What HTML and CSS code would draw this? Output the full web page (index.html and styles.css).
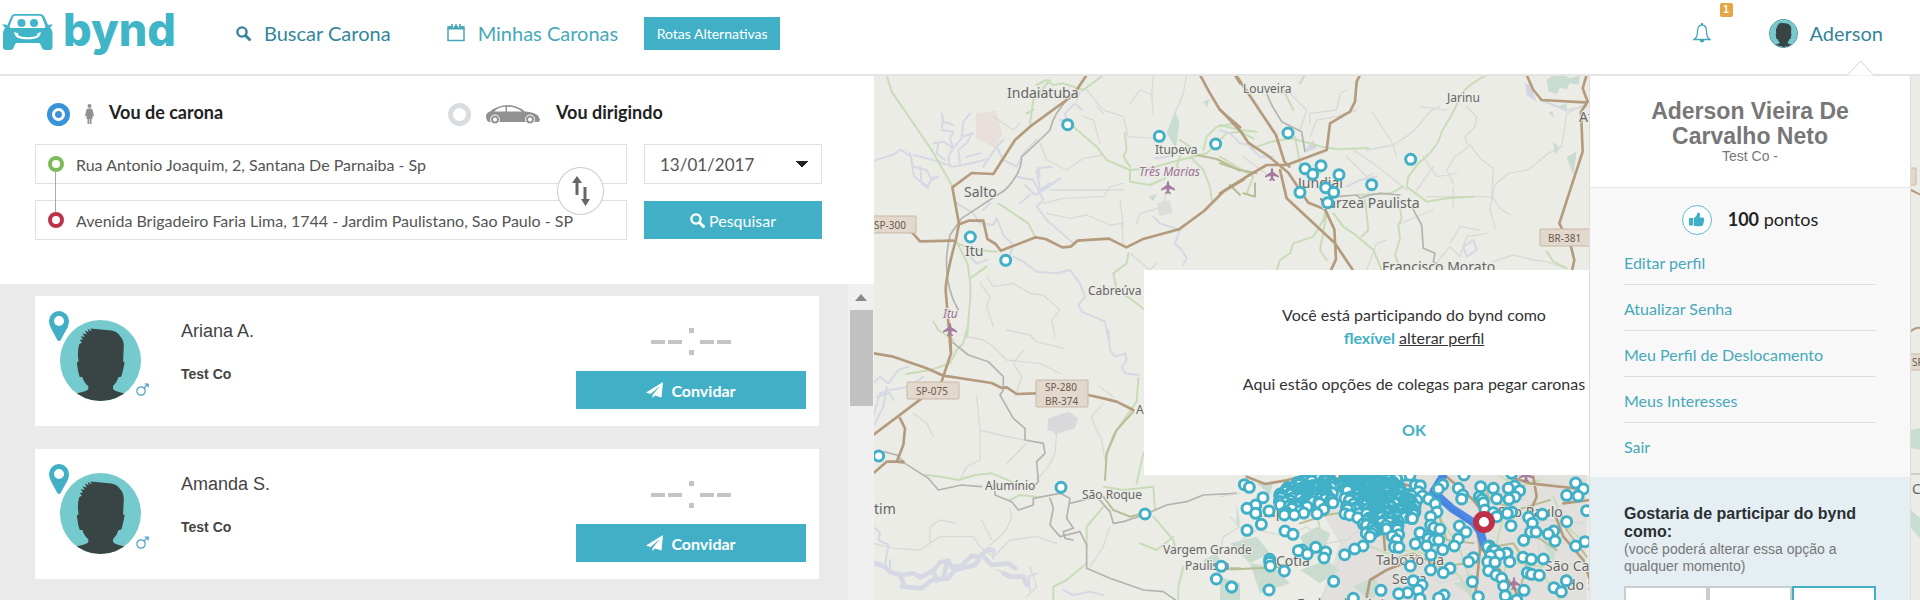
FILE: index.html
```html
<!DOCTYPE html>
<html lang="pt-BR">
<head>
<meta charset="utf-8">
<title>bynd</title>
<link rel="stylesheet" href="styles.css">
</head>
<body>
<svg class="defs" aria-hidden="true">
  <symbol id="avatar" viewBox="0 0 240 240">
    <clipPath id="avatar-clip"><circle cx="120" cy="120" r="120"/></clipPath>
    <g clip-path="url(#avatar-clip)">
      <rect width="240" height="240" fill="#74cacc"/>
      <path fill="#394444" d="M55 124q-5-1-5 4l4 25 4 15q3 2 8 0 5 18 18 28v8q-2 8-30 12l-20 10v20h172v-20l-20-10q-26-4-29-12v-8q12-12 17-28 5 2 8-1l4-15 5-24q1-5-4-5l2-45q0-18-9-28-10-16-28-19l-62-6 4 9-12-8 3 10-11-5 5 12-12-4 6 11-12-2 7 10-10 1 7 8-8 5q-4 12-4 31z"/>
    </g>
  </symbol>
  <symbol id="search" viewBox="0 0 15 15"><circle cx="6" cy="6" r="4.6" fill="none" stroke="currentColor" stroke-width="2.4"/><path d="M9.5 9.5 13.5 13.5" stroke="currentColor" stroke-width="3" stroke-linecap="round"/></symbol>
  <symbol id="pin" viewBox="0 0 20 30"><path fill="#41b0c7" fill-rule="evenodd" d="M10 0a10 10 0 0 1 10 10c0 4-2 8-4 11l-4 7.500q-2 3-4 0L4 21C2 17 0 14 0 10A10 10 0 0 1 10 0zm0 5a5 5 0 1 0 0 10 5 5 0 0 0 0-10z"/></symbol>
  <symbol id="male" viewBox="0 0 13 13"><g fill="none" stroke="#4aa0c8" stroke-width="1.200"><circle cx="5" cy="8" r="4.200"/><path d="M8 5 12 1M8.500 1H12.200V4.500"/></g></symbol>
  <symbol id="plane" viewBox="0 0 17 16"><path fill="currentColor" d="M17 0 0 10.500 4.500 12 14 4 6.500 13V16L9 13.500 15.500 15.500z"/></symbol>
  <symbol id="no-time" viewBox="0 0 81 28"><path fill="#c4c4c4" d="M0 12h14v4H0zM17 12h14v4H17zM49 12h14v4H49zM66 12h14v4H66zM38 0h5v5h-5zM38 22h5v5h-5z"/></symbol>
  <symbol id="airport" viewBox="0 0 14 14"><path fill="#a57a9d" d="M7 0q1.300 1 1.300 4.500L14 8.500V10L8.300 8.300V11L10 12.600V13.500L7 12.800 4 13.500V12.600L5.700 11V8.300L0 10V8.500L5.700 4.500Q5.700 1 7 0z"/></symbol>
</svg>

<header class="topbar">
  <a class="logo" href="#">
    <svg class="logo-car" viewBox="0 0 51 37" aria-hidden="true">
      <g fill="#41b5c8">
        <path fill-rule="evenodd" d="M13 0h25q3 0 4.500 3l4 9q4 3 4 8v13q0 3-3 3h-4q-3 0-4-3-1-4-3-4H15q-2 0-3 4-1 3-4 3H4q-3 0-3-3V20q0-5 4-8L9 3q1-3 4-3zm0 1.800q-1.500 0-2 1.500L7.500 12.500q0 1.500 2 1.500h32q2 0 2-1.500L40 3.300q-.5-1.500-2-1.500zM12 18q1 6 7 6.800 6.500 1 13 0 6-.8 7-6.800l-4 1.500.8 1.200q-1.500 1.700-4 2.100-6 .8-12 0-2.500-.4-4-2.100l.8-1.200z"/>
        <circle cx="19.500" cy="9" r="4"/><circle cx="32" cy="9" r="4"/>
        <path d="M0 10.500h4l3 3-2 2zM51 10.500h-4l-3 3 2 2z"/>
      </g>
    </svg>
    <span>bynd</span>
  </a>
  <nav class="nav">
    <a class="nav-link nav-link-active" href="#"><svg class="icon-15" aria-hidden="true"><use href="#search"/></svg>Buscar Carona</a>
    <a class="nav-link" href="#"><svg class="icon-18" viewBox="0 0 18 18" aria-hidden="true"><path fill="none" stroke="currentColor" stroke-width="1.500" d="M1 3h16v13.500H1z"/><path fill="currentColor" d="M1 2h16v3.500H1z"/><path stroke="#fff" stroke-width="1" d="M6.500 1v2.500M11.500 1v2.500"/><path stroke="currentColor" stroke-width="1.500" d="M5 0v3M9 0v3M13 0v3"/></svg>Minhas Caronas</a>
    <button class="btn btn-routes" type="button">Rotas Alternativas</button>
  </nav>
  <div class="account">
    <button class="bell" type="button" aria-label="Notificações">
      <svg class="icon-18 bell-icon" viewBox="0 0 18 20" aria-hidden="true"><path fill="none" stroke="currentColor" stroke-width="1.300" d="M1 16.500q3.500-2 3.500-8Q4.500 2 9 2t4.500 6.500q0 6 3.500 8z"/><path fill="currentColor" d="M8 0h2v2H8zM6.500 17h5q-.5 2.500-2.500 2.500T6.500 17z"/></svg>
      <span class="badge">1</span>
    </button>
    <button class="user" type="button"><svg class="user-avatar" aria-hidden="true"><use href="#avatar"/></svg>Aderson</button>
  </div>
</header>

<main class="content">
  <section class="finder">
    <form class="search">
      <div class="modes">
        <label class="mode"><input class="radio" type="radio" name="mode" checked>
          <svg class="icon-person" viewBox="0 0 9 20" aria-hidden="true"><path fill="#919191" d="M4.500 0a2 2 0 1 1 0 4 2 2 0 0 1 0-4zM3 4.500h3q1.500 0 1.800 2L9 12l-1 .5L7.500 11v4h-1V20H4.800v-5h-.6v5H2.500v-5h-1v-4L1 12.500 0 12l1.200-5.500q.3-2 1.800-2z"/></svg>
          <span class="mode-text">Vou de carona</span></label>
        <label class="mode"><input class="radio" type="radio" name="mode">
          <svg class="icon-car" viewBox="0 0 54 19" aria-hidden="true"><path fill="#919191" fill-rule="evenodd" d="M0 11q0-3 4-4.500Q12 0 22 0q9 0 17 6.500 9 .5 13 4l2 4q0 2-2 2.500H3q-3-1-3-6zM8 6.500h11.500V1.800Q13 2 8 6.500zM21 1.800v4.700h15Q30 1.500 21 1.800z"/><g fill="#919191" stroke="#fff"><circle cx="9" cy="14.500" r="4.500"/><circle cx="44" cy="14.500" r="4.500"/></g><g fill="#fff"><circle cx="9" cy="14.500" r="2"/><circle cx="44" cy="14.500" r="2"/></g></svg>
          <span class="mode-text">Vou dirigindo</span></label>
      </div>
      <div class="fields">
        <div class="route">
          <label class="place"><i class="dot dot-from"></i><input class="place-input" type="text" aria-label="Origem" value="Rua Antonio Joaquim, 2, Santana De Parnaiba - Sp"></label>
          <label class="place"><i class="dot dot-to"></i><input class="place-input" type="text" aria-label="Destino" value="Avenida Brigadeiro Faria Lima, 1744 - Jardim Paulistano, Sao Paulo - SP"></label>
          <i class="route-line"></i>
          <button class="swap" type="button" aria-label="Inverter"><svg class="icon-18 swap-icon" viewBox="0 0 18 30" aria-hidden="true"><path fill="#666" d="M5 0l5 7H6.500v12h-3V7H0zM11.500 11h3v12H18l-4.500 7L9 23h2.500z"/></svg></button>
        </div>
        <div class="when">
          <select class="date" aria-label="Data"><option>13/01/2017</option></select>
          <button class="btn btn-search" type="button"><svg class="icon-15" aria-hidden="true"><use href="#search"/></svg>Pesquisar</button>
        </div>
      </div>
    </form>
    <div class="results">
      <ul class="cards">
        <li class="card">
          <div class="photo"><svg class="photo-avatar" aria-hidden="true"><use href="#avatar"/></svg><svg class="photo-pin" aria-hidden="true"><use href="#pin"/></svg><svg class="photo-gender" aria-hidden="true"><use href="#male"/></svg></div>
          <div class="person"><h2 class="person-name">Ariana A.</h2><p class="person-company">Test Co</p></div>
          <div class="invite"><svg class="no-time" role="img" aria-label="Sem horário"><use href="#no-time"/></svg><button class="btn btn-invite" type="button"><svg class="icon-17" aria-hidden="true"><use href="#plane"/></svg>Convidar</button></div>
        </li>
        <li class="card">
          <div class="photo"><svg class="photo-avatar" aria-hidden="true"><use href="#avatar"/></svg><svg class="photo-pin" aria-hidden="true"><use href="#pin"/></svg><svg class="photo-gender" aria-hidden="true"><use href="#male"/></svg></div>
          <div class="person"><h2 class="person-name">Amanda S.</h2><p class="person-company">Test Co</p></div>
          <div class="invite"><svg class="no-time" role="img" aria-label="Sem horário"><use href="#no-time"/></svg><button class="btn btn-invite" type="button"><svg class="icon-17" aria-hidden="true"><use href="#plane"/></svg>Convidar</button></div>
        </li>
      </ul>
      <div class="scrollbar"><i class="scroll-up"></i><i class="scroll-thumb"></i></div>
    </div>
  </section>

  <section class="map" aria-label="Mapa">
    <svg class="map-canvas" viewBox="874 76 1046 524" preserveAspectRatio="xMinYMin slice">
      <g fill="none" stroke-linejoin="round" stroke-linecap="round">
        <g transform="translate(870 70) scale(.33333)">
          <path fill="#e8dfdb" d="M318 130l60-8 18 70-20 42-58-30z"/><path fill="#c9dcd2" d="M890 190l24-65 14 30-10 80zM1000 95l20-8-10 25zM835 380l25-8-10 20z"/><path fill="#dddddb" d="M860 400l40-10 8 40-40 8z"/>
          <g class="water"><path d="M10 272l60-18 22-15 30 20 10 60 40 30 20-30M130 255l60 15 60 20 60-12 40-10M240 290l-5-30 15-25-10-30 10-20-35-5 5-40M250 235l-30-20-30 5M250 235l25-30 5-50 20-25M275 200l35-10M225 270l-25-20 5-30M215 130l5 25 30 10M270 280l-5-40 25-20 15-30M120 250l10 40 40 10 15 30 20-10M150 290l5 50 20 15M290 260l40-10M340 290l40-60 20-20M380 230l20 40 40 20 20-40 40-40M440 320l50 10 30 60-20 20 30 40 80 70M465 345l30 30 20-10 55-40M480 375l-30 25M500 300l10 60 30-20M260 400l50 30 20 30 40 5 10-20 20 50 30 30-10 30M340 420l20-20M300 560l20 20 30-10M430 560l30 15 40 30 60 5 40-10 30 40 15 40-20 25 10 20 70 30 10 50M850 440l20 20 60 20-15 40 20 20 15 25-10 20M570 150l20 0-5-20 30-30 20 20M545 290l-40 5 5 25M855 265l40-5 10-20M620 90l10-25"/></g>
          <g class="minor"><path d="M650 60l50 60 60 20 14 60 80 5M850 15l-5 60 5 60M950 10l-10 60-30 70M510 220l20 50 60 30 50-35 60-10M520 400l60-15 120-5 20-30 40-10M530 430l70 15 50-10 70 30 35-5 5 70M750 390l10 80M640 140l30 10 20 70M350 620l20 30 60-10 50 30 40 5 50 45-25 30 10 50M780 550l60 50 20-20M680 110l20 20M800 460l10-30 70-20 10-50 25-10M540 360h220M330 640l30 40-10 30 20 60M370 140l60 40 20-20M780 100l30-40 40 15"/></g>
          <g class="green"><path d="M50 15l15 50 120 175 60 105M480 160l10-70 50-60M500 45l30-15 20 15 30-5 60 20 60-45M470 130l20-10M610 170l70 60 30 40 70 30 60-5 90-25 80-20 60-60 40-5 40 20M780 300v35l60 10 45-20M765 190l5 50-10 20 20 30M385 400l60 40 30 20 20 40M258 512l35 70 8 60v40l-10 120M260 520l60 20 60 5M350 590l-50 35M775 550l-5 30-40 30 10 50 40 25 45 35M1000 240l10-40 30-30 60-10M930 210l30 20 10 40 30 30 20 50 5 40M930 260l-10 30 30 20M190 755l15 25 45 30"/></g>
          <path class="olive" d="M980 255l60 12 70 35M1080 345l30 30"/>
          <path class="rail" d="M600 80q-50 50-60 100-60 60-85 80 0 50-50 100l-130 85-35 50q-30 130 25 225"/>
          <path class="road" d="M650 15l-40 60-130 95-45 40-65 102-65-3-58 43 20 110-10 50q-30 110-30 150l15 180M270 462l25-10h45l12 55 25 15 15 20 105-40 30 5 50 25 25-2 20-18 95-6 52 26 48-24 110-30 75-55 60-60 60-35M120 480l30 34 100-2M990 15l30 55 30 50 60 52M1095 15l15 25"/>
        </g>
        <g transform="translate(1220 70) scale(.33333)">
          <path fill="#c9dcd2" d="M980 30l20-15h30l20 10 30-8-5 28-25-5-10 18-20-5-10 20-25-10zM1010 110l30-10v25zM1040 260l30-15-10 70zM1000 215l20 20-15 20zM985 130l12-8 5 20z"/><path fill="#d5d5e2" d="M915 40l15 5 20 50-30-20zM255 240l25-30 10 25-30 10z"/>
          <g class="water"><path d="M0 180l30 10 30 30 25 5 35 35 40 0M380 350l40-20 50-10M730 530l30-20 10 30-30 20zM960 90l80 30 60-10"/></g>
          <g class="minor"><path d="M70 260l80 60M270 160v-30l80-10 10-50 20-10M530 260l-15-45-60-90M440 240l80-15 60-40 50-60 30-15M740 110l30 30-5 30-30 30 10 30-40 30-25 40 20 40M750 225l30 40 40 30-5 95M820 385l20 30 30 20M1100 100l-60 30-15 100-40 20-60 50-60 10-40 35-15 70 15 60M620 380h200M560 360l-100-80-60-40M690 520l30-50 60 10M640 590l50-60 30 30 20-60 60-10M820 575l60-20 60 15 40 5 60 20M200 60l60 60-20 60M380 260l60 60 20-10M270 200l20-50 60-10 60-20M440 600l30-80 30-10M540 460l100-40M600 110l80 10M610 260l40 60 60-10M640 290l-50 70M700 350v60"/></g>
          <g class="green"><path d="M0 165l60 15 50 5M95 235l60-20 60-10 90 25 50 8 90-4M800 15q-80 40-90 90-20 40-45 80-10 50-70 95l-30 40-5 30 60 45 60-10 80-5M550 350l-40 20-100 5M340 430l30 40 30 20 60 50 25 60M435 390l10 90-20 20M540 415l5 30-10 20 5 40-15 50 15 40M320 410l-10 40-30 50-60 20-10 30-30 20-10 30M320 430l-20 110 20 30M980 545l20 30 40 20M240 40l15-25M225 200l15 80 60 30M0 260l100 60-20 50M190 60l30 60"/></g>
          <path class="olive" d="M0 280l60 20 50 10M70 370l35 10v-40"/>
          <path class="rail" d="M140 70l15 35 30 50 60 30 10 60M575 410l30 55 5 70 35 15-5 25 20 15M350 380l60-5 10 10 30-10 30-5 60 5"/>
          <path class="road" d="M0 118l65 70 20 30 60 40 60 50 60 90 50 20 28 60 5 90-15 32M48 15l80 120 40 60 25 80 15 15M0 370l80-50 60-35h60l120-45 10-80 60-35 15-30 5-60 15-30M180 300l20 85 145 135 52 78M920 15l20 45 25 30 130 7M1100 15l-12 40 15 40-20 30 5 120-70 215 35 70 10 40-12 55"/>
        </g>
        <g transform="translate(870 330) scale(.33333)">
          <path fill="#d9d9dc" d="M535 265l60-20 30 20-10 30-60 18-5 -10-18 0z"/><path fill="#c9dcd2" d="M1000 690l40-20 20 40-50 10zM1100 520l10 60-10 10z"/>
          <g class="water"><path d="M10 160l20-20 25 20 30-40 30-10M10 260l20-70 30-10 60-10 40-30M50 170l-10 60-30 60M20 200l40-10 10 20M715 0l5 60 15 20 30-10 5 20-15 20 10 20 40 5M10 590l20 20-5 20 30 15-10 60M60 690v30M370 660v25M480 780l-5-40 25-10M580 780l30 15 50-10 40 10"/><path class="lake" d="M60 725l30 10 40-5 20 12 40-20 20-25 25-5 10 20 30-5 30-30 20 5 30-25 15 5M95 770l60 5 30-25 50-5 20-25 60-15 10-15M340 680l25 25 50-5 20 15M90 735l15 35M190 722l10 30M400 730l20 10 40 0 10 25M230 700l-10 45M60 725l-15-15-30-10"/></g>
          <g class="minor"><path d="M290 20l50 10 30 20 40 40 100 10 60 30M320 200l10 100 0 90-40 20-20 40M410 0l70 15 20 20 80 20M330 300l60 15 70 15M700 220l-35 40 10 30 20 40 10 60M470 340l-60 60M560 310l-5 60-20 40-35 40M10 640l60 15 80 5 60-40 100 0 20 30 40 30 50-50 80-10 60 20M420 535l5 30-20 40-45 40M335 570l30 60M720 590l-20 60-40 60M440 740l-60-20M690 170l40 30M130 250l40 30 20 40M1110 590l-50 30-10 40M460 60l-30 40 25 40-20 60M480 710l20 60-30 30M180 640v-50l30-20 50 10"/></g>
          <g class="green"><path d="M290 0l-10 40-20 20-20 40-60 20-72 12M165 435l50 5 50 10 50-15 50-5 60 25 40 15M420 510l30-15 50 5M805 145l-5 70-70 100-20 60M700 530l-50 60v60M650 700l-60 50-40 20 0 40M700 470l60 10 90-10 5 70M850 560l60 70 5 20-20 10M940 710l-15 60 0 40M810 640l50 20 50-40M820 370l-20 90"/></g>
          <path class="olive" d="M705 450l5-80 30-70 50-55M1060 715h50M700 500l30 40 50 20 40-10"/>
          <path class="rail" d="M245 35l50 40 60 20 45 45v40l-10 15 40 70 35 30v35l55 10 5 30-25 25 5 60-20 20M40 365l40 10 25 25 70 45 30 35 70-15 60 5M375 470v25l50 20 20 25 45-15v-20l80-15 30 15-10 60 20 30-30 10 5 20 25 5M540 505l10 30-10 50 30 35 60-15 20 40v70l70 30 100 35 60 5 80 55M600 520l80-20 40 45 10 35 30-5 60-20 70-30 60-10 50-20 100-5"/>
          <path class="road" d="M10 70l60 10 100 35 50 22 145 22 30 15 15-2 30 20 60-2M240 0l3 70-30 90M155 205L10 315M90 265l15 30-5 50-20 50 20 2M10 430l40-35h50M655 195l45 10 40 10 50 25"/>
        </g>
        <g transform="translate(1220 330) scale(.33333)">
          <path fill="#e2e0dc" d="M380 430l720-10v390H300l60-170-60-100z"/>
          <path fill="#cadbd0" d="M110 460l50-5-10 40zM240 620l50-30 40 20-20 60-50-10zM30 640l80-20 40 50-60 30zM90 700l70 10 50 50-90 30zM240 720l80-30 40 30-60 40zM0 740l60 20v50H0zM400 770l60-30 30 40-40 30zM700 760l50-10 10 50zM970 640l40 10-10 50z"/>
          <g class="minor"><path d="M0 500l60-10M50 640l60-40 90 20 60-30 60 50 60-10 70-60M300 810l40-70 30-80M30 560l60 60M420 590l60 20 60 60 60 120M600 700l60 60 100-30M640 560l-60 90M700 450l40 70 120-30 80 30M860 440l30 100 60 80 20 90M900 600l80-30 120 10M560 740l80-60"/></g>
          <g class="green"><path d="M120 560l60-30 60-10M300 600l-10-60M430 640l70 30 80-10 60 20 80 60 40 70M660 560l60 100 30 90M600 600l20 80M850 560l-20 80 60 60 80 10M840 440l60 30 60-20M1000 500l40 90 70 60M860 700l-20 60 60 50M960 720l60 90"/></g>
          <path class="olive" d="M0 720l200-10M240 580l80-25 60-10M480 700l100-30 80 40 80-10M640 500l40 130 80 10M790 460l20 50 80 30 100-30M820 650l60-10 40 60-20 80M920 560l30 60 60 40M1020 540l20 60 60 80"/>
          <path class="road" d="M80 440l55 22 60-10 45-12M540 460l60 15 80 50 90 70 10 60-10 110-10 55M490 600l5 60M600 680l-100 40-50 30-10 50M680 440l80 70 30 40M870 440l60 20 180 20M940 440l10 60-30 70M1000 540l30 80 60 70 20 60M1030 520l80-10M780 650l100 120 20 40"/>
          <path stroke="#3b7fe8" stroke-width="24" opacity=".9" d="M668 440l-28 45 55 50 65 42 22 30 12 42"/>
        </g>
        <path class="road" d="M1909 333q6-6 12-5M1911 190l10 5"/><path class="rail" d="M1910 474h10"/><path fill="#c9dcd2" d="M1911 430l9-2v22l-9-2zM1911 510l9 8v20l-9-10z"/>
      </g>
      <g class="shields">
        <rect x="866" y="216" width="50" height="17" rx="1"/><rect x="1540" y="229" width="51" height="17" rx="1"/><rect x="907" y="382" width="52" height="17" rx="1"/><rect x="1036" y="380" width="52" height="27" rx="1"/><rect x="1880" y="168" width="36" height="17" rx="1"/><rect x="1905" y="354" width="36" height="16" rx="1"/>
      </g>
      <g class="shield-text"><text x="874" y="229">SP-300</text><text x="1548" y="242">BR-381</text><text x="916" y="395">SP-075</text><text x="1045" y="391">SP-280</text><text x="1045" y="405">BR-374</text><text x="1912" y="366">SP</text></g>
      <g class="town"><text x="1155" y="154">Itupeva</text><text x="1088" y="295">Cabreúva</text><text x="1243" y="93">Louveira</text><text x="1447" y="102">Jarinu</text><text x="1136" y="414">Ar</text><text x="985" y="490">Alumínio</text><text x="1082" y="499">São Roque</text><text x="1163" y="554">Vargem Grande</text><text x="1185" y="570">Paulista</text></g>
      <g class="city"><text x="1007" y="98">Indaiatuba</text><text x="964" y="197">Salto</text><text x="965" y="256">Itu</text><text x="1298" y="188">Jundiaí</text><text x="1320" y="208">Várzea Paulista</text><text x="1382" y="272">Francisco Morato</text><text x="874" y="514">tim</text><text x="1310" y="479">Barueri</text><text x="1258" y="517">Itapevi</text><text x="1498" y="517">São Paulo</text><text x="1276" y="566">Cotia</text><text x="1376" y="565">Taboão da</text><text x="1392" y="584">Serra</text><text x="1545" y="571">São Caetano</text><text x="1567" y="590">do Sul</text><text x="1297" y="609">Embu das Artes</text><text x="1579" y="122">Atibaia</text><text x="1912" y="494">C</text></g>
      <g class="airfield"><text x="1139" y="176">Três Marias</text><text x="943" y="318">Itu</text></g>
      <use href="#airport" x="1161" y="180" width="14" height="15"/><use href="#airport" x="1265" y="167" width="14" height="15"/><use href="#airport" x="943" y="322" width="14" height="15"/><use href="#airport" x="1507" y="576" width="14" height="15"/><use href="#airport" x="1519" y="468" width="14" height="15"/>
      <g id="markers" class="markers"></g>
      <circle cx="1484" cy="522" r="8" fill="#fff" stroke="#bd3246" stroke-width="6"/>
    </svg>
    <div class="dialog" role="dialog" aria-label="Perfil">
      <p>Você está participando do bynd como<br><strong class="accent">flexível</strong> <a class="change" href="#">alterar perfil</a></p>
      <p>Aqui estão opções de colegas para pegar caronas</p>
      <button class="dialog-ok" type="button">OK</button>
    </div>
  </section>

  <aside class="menu">
    <svg class="menu-arrow" viewBox="0 0 27 16" aria-hidden="true"><path fill="#fff" stroke="#d2d2d2" d="M0 15.500 13.500 1 27 15.500"/></svg>
    <div class="menu-head"><h1 class="menu-name">Aderson Vieira De Carvalho Neto</h1><p class="menu-company">Test Co -</p></div>
    <div class="menu-body">
      <p class="points"><svg class="thumb" viewBox="0 0 30 30" aria-hidden="true"><circle cx="15" cy="15" r="14.500" fill="#fff" stroke="#5dbccc"/><path fill="#41b0c7" d="M7 13h4v7.500H7zM11.700 13q3.300-1.500 3.800-5.500 2.700-.5 2.700 2.500l-.5 2.500H21q1.700.5 1.200 2.500l-1 4.500q-.5 1.700-2.200 1.700h-4q-1.800 0-3.300-.7z"/></svg><span><strong>100</strong> pontos</span></p>
      <ul class="links">
        <li><a href="#">Editar perfil</a></li><li><a href="#">Atualizar Senha</a></li><li><a href="#">Meu Perfil de Deslocamento</a></li><li><a href="#">Meus Interesses</a></li><li><a href="#">Sair</a></li>
      </ul>
    </div>
    <div class="menu-role">
      <h2 class="role-title">Gostaria de participar do bynd como:</h2>
      <p class="role-note">(você poderá alterar essa opção a qualquer momento)</p>
      <div class="roles"><button class="role" type="button" aria-label="Passageiro"></button><button class="role" type="button" aria-label="Motorista"></button><button class="role role-on" type="button" aria-label="Flexível"></button></div>
    </div>
  </aside>
</main>
<script src="markers.js"></script>
</body>
</html>
```

FILE: styles.css
```css
* { box-sizing: border-box; }
body { margin: 0; height: 100vh; display: flex; flex-direction: column; overflow: hidden; background: #fff; color: #333; font-family: Lato, "Liberation Sans", sans-serif; font-size: 16px; }
h1, h2, p, ul { margin: 0; padding: 0; }
ul { list-style: none; }
a { color: inherit; text-decoration: none; }
button, input, select { font: inherit; color: inherit; border: 0; background: none; padding: 0; margin: 0; }
button { cursor: pointer; }
.defs { position: absolute; width: 0; height: 0; }
.icon-15 { width: 15px; height: 15px; }
.icon-17 { width: 17px; height: 16px; }
.icon-18 { width: 18px; height: 18px; }
.btn { display: flex; align-items: center; justify-content: center; background: #41b0c7; color: #fff; }

.topbar { flex: none; height: 76px; display: flex; align-items: center; padding: 0 37px 8px 2px; border-bottom: 2px solid #e4e4e4; color: #46a9ba; font-size: 20px; }
.logo { display: flex; align-items: center; gap: 10px; width: 234px; padding-bottom: 6px; color: #41b5c8; font: 800 45px/54px Inter, Lato, sans-serif; }
.logo-car { width: 51px; height: 37px; margin-top: 4px; }
.nav { display: flex; align-items: center; flex: 1; }
.nav-link { display: flex; align-items: center; gap: 13px; margin-right: 56px; }
.nav-link-active, .user { color: #34859b; }
.nav-link + .nav-link { margin-right: 26px; }
.btn-routes { width: 136px; height: 33px; font-size: 14px; }
.account { display: flex; align-items: center; gap: 58px; }
.bell { position: relative; display: flex; color: #46a9ba; }
.bell-icon { height: 20px; }
.badge { position: absolute; left: 27px; top: -20px; width: 13px; height: 14px; border-radius: 2px; background: #e5a645; color: #fff; font: bold 10px/14px "Liberation Sans", sans-serif; }
.user { display: flex; align-items: center; gap: 12px; }
.user-avatar { width: 29px; height: 29px; border: 1px solid #34859b; border-radius: 50%; }

.content { position: relative; flex: 1; min-height: 0; display: grid; grid-template-columns: 874fr 1046fr; }
.finder { display: flex; flex-direction: column; min-height: 0; min-width: 0; }
.search { padding: 21px 52px 44px 35px; }
.modes { display: grid; grid-template-columns: 401px 1fr; padding-left: 12px; height: 47px; }
.mode { display: flex; align-items: center; height: 34px; font-size: 18px; font-weight: bold; color: #222; }
.mode-text { padding-bottom: 5px; }
.radio { appearance: none; width: 23px; height: 23px; border-radius: 50%; border: 5px solid #dadde0; margin-right: 15px; }
.radio:checked { border-color: #3a92d8; background: radial-gradient(circle, #3a92d8 3px, #fff 4px); }
.icon-person { width: 9px; height: 20px; margin-right: 15px; }
.icon-car { width: 54px; height: 19px; margin-right: 16px; }
.fields { display: grid; grid-template-columns: 1fr 178px; gap: 17px; color: #555; }
.route { position: relative; display: grid; gap: 16px; }
.place { display: flex; align-items: center; height: 40px; border: 1px solid #e0e0e0; padding: 0 12px; gap: 12px; }
.place-input { flex: 1; min-width: 0; outline: 0; }
.dot { width: 16px; height: 16px; border-radius: 50%; border: 4px solid #7cbb56; background: #fff; }
.dot-to { border-color: #bd3246; }
.route-line { position: absolute; left: 20px; top: 28px; bottom: 28px; width: 1px; background: #aaa; }
.swap { position: absolute; right: 23px; top: 23px; width: 47px; height: 48px; border: 1px solid #ccc; border-radius: 50%; background: #fff; display: flex; align-items: center; justify-content: center; }
.swap-icon { height: 30px; }
.when { display: grid; gap: 16px; }
.date { appearance: none; height: 40px; border: 1px solid #e0e0e0; padding: 0 15px; background: linear-gradient(to bottom left, #222 50%, transparent 50%) right 19px center / 6px 7px no-repeat, linear-gradient(to bottom right, #222 50%, transparent 50%) right 13px center / 6px 7px no-repeat; border-radius: 0; font-size: 17px; }
.btn-search { height: 38px; gap: 4px; }

.results { flex: 1; min-height: 0; display: grid; grid-template-columns: 1fr 26px; background: #eaeaea; overflow: hidden; }
.cards { padding: 12px 29px 0 35px; display: flex; flex-direction: column; gap: 23px; }
.card { flex: none; height: 130px; background: #fff; display: flex; padding: 0 13px 0 14px; }
.photo { position: relative; width: 132px; padding: 24px 0 0 11px; }
.photo-avatar { width: 81px; height: 81px; }
.photo-pin { position: absolute; left: 0; top: 15px; width: 20px; height: 30px; }
.photo-gender { position: absolute; left: 87px; top: 87px; width: 13px; height: 13px; }
.person { flex: 1; padding-top: 24px; font-family: "Liberation Sans", sans-serif; color: #444; }
.person-name { font-size: 18px; line-height: 22px; font-weight: normal; }
.person-company { margin-top: 24px; font-size: 14px; line-height: 16px; font-weight: bold; }
.invite { width: 230px; padding-top: 32px; display: flex; flex-direction: column; align-items: center; gap: 15px; }
.no-time { width: 81px; height: 28px; }
.btn-invite { width: 100%; height: 38px; gap: 8px; font-weight: bold; }
.scrollbar { background: #f0f0f0; display: flex; flex-direction: column; align-items: center; padding: 10px 1px 0; }
.scroll-up { border: 6px solid transparent; border-top: 0; border-bottom: 7px solid #8a8a8a; }
.scroll-thumb { margin-top: 9px; width: 23px; height: 96px; background: #c1c1c1; }

.map { position: relative; min-width: 0; min-height: 0; overflow: hidden; background: #ebece6; }
.map-canvas { display: block; width: 100%; height: 100%; font-family: "Noto Sans", sans-serif; }
.water { stroke: #d6d8e3; stroke-width: 6; }
.lake { stroke-width: 14; }
.minor { stroke: #d9dad6; stroke-width: 4; }
.green { stroke: #c8dcb7; stroke-width: 6; }
.olive { stroke: #b8bd96; stroke-width: 6; }
.rail { stroke: #b3b3b0; stroke-width: 5; }
.road { stroke: #b49b7e; stroke-width: 8; }
.map-canvas > g > .road { stroke-width: 2; }
.map-canvas > g > .rail { stroke-width: 1; }
.shields { fill: #e2d8cc; stroke: #c9b8a4; }
.shield-text { font-size: 10px; fill: #6c5b4e; }
.town, .city, .airfield { fill: #666; stroke: #ebece6; stroke-width: 2px; paint-order: stroke; font-size: 12px; }
.city { font-size: 14px; }
.airfield { fill: #9c6f94; font-style: italic; }
.markers circle { fill: #fff; stroke: #41b0c7; stroke-width: 3; }
.dialog { position: absolute; left: 270px; top: 194px; width: 540px; padding: 33px 20px 34px; background: #fff; text-align: center; font-size: 16px; line-height: 23px; display: grid; gap: 23px; justify-items: center; }
.accent, .dialog-ok { color: #41b0c7; }
.change { text-decoration: underline; }
.dialog-ok { font-weight: bold; }

.menu { position: absolute; right: 9px; top: 0; bottom: 0; display: flex; flex-direction: column; width: 322px; border: 1px solid #ddd; border-width: 0 1px; background: #fff; }
.menu-arrow { position: absolute; right: 36px; top: -16px; width: 27px; height: 16px; }
.menu-head { flex: none; height: 112px; padding: 23px 50px 0; border-bottom: 1px solid #e6e6e6; text-align: center; font-family: "Liberation Sans", sans-serif; color: #777; }
.menu-name { font-size: 23px; line-height: 25px; }
.menu-company { font-size: 14px; line-height: 14px; }
.menu-body { flex: none; height: 289px; padding: 17px 34px 0; background: #f8f8f8; }
.points { display: flex; align-items: center; justify-content: center; gap: 16px; font-size: 18px; line-height: 28px; color: #222; }
.points span { padding-bottom: 2px; }
.thumb { width: 30px; height: 30px; }
.links { padding-top: 4px; }
.links li { height: 46px; line-height: 48px; border-bottom: 1px solid #dedede; color: #46a9ba; }
.links li:last-child { border-bottom: 0; }
.menu-role { flex: 1; min-height: 0; overflow: hidden; padding: 28px 34px 0; background: #e5eef2; font-family: "Liberation Sans", sans-serif; }
.role-title { font-size: 16px; line-height: 18px; color: #2a2f33; }
.role-note { font-size: 14px; line-height: 17px; color: #777; }
.roles { display: grid; grid-template-columns: repeat(3, 1fr); margin-top: 11px; }
.role { height: 80px; background: #fff; border: 2px solid #c8cdd0; }
.role-on { border-color: #41b0c7; }
```

FILE: markers.js
```js
// Each sheet has its origin on the map; points are in thirds of a map unit.
const sheets = [
  [870, 70, [[593,164],[868,199],[1037,222],[301,501],[407,571]]],
  [1220, 70, [[204,189],[255,296],[303,287],[278,313],[357,314],[240,367],[317,353],[341,367],[323,398],[455,344],[572,268]]],
  [870, 330, [[26,378],[573,472],[825,552],[1054,709],[1039,747],[1085,771]]],
  [1220, 330, [[73,464],[88,472],[81,535],[107,525],[129,503],[107,550],[147,543],[81,601],[124,583],[195,603],[219,613],[235,662],[246,660],[262,672],[287,652],[317,666],[312,684],[374,674],[404,657],[429,648],[450,620],[149,688],[149,697],[151,708],[193,723],[35,771],[147,780],[341,754],[483,781],[400,805],[536,791],[563,788],[594,780],[580,752],[606,765],[600,806],[571,708],[632,720],[670,728],[690,715],[672,795],[656,804],[775,800],[757,755],[746,695],[760,683],[537,652],[523,650],[530,630],[536,614],[586,641],[600,608],[620,648],[633,675],[668,659],[656,630],[626,617],[660,598],[632,585],[703,648],[715,626],[738,606],[718,588],[651,546],[632,560],[646,521],[626,507],[607,498],[595,485],[601,467],[586,466],[655,477],[668,464],[715,475],[728,495],[725,507],[732,435],[782,470],[820,475],[778,500],[786,508],[790,518],[795,540],[830,506],[867,508],[865,475],[884,468],[899,482],[885,500],[862,550],[875,546],[830,560],[820,548],[873,587],[926,562],[937,580],[967,553],[911,631],[932,606],[948,606],[985,612],[1001,603],[1005,633],[1040,575],[1067,459],[1040,496],[1074,498],[1090,477],[1100,542],[1095,635],[1067,648],[803,650],[818,660],[838,673],[861,670],[869,695],[803,695],[825,697],[806,722],[828,735],[845,745],[851,768],[856,797],[890,810],[912,781],[909,682],[934,688],[970,687],[922,728],[935,733],[958,736],[1039,752],[1002,773],[1024,785],[530,446],[550,436],[570,436],[875,430],[325,469],[339,518],[375,505],[375,551],[291,551],[311,538],[193,555],[223,555],[181,525]]]
];
// Crowded areas: centre, radii, count.
const crowds = [[400,462,42,26,50],[470,480,70,38,110],[440,530,65,45,80],[520,540,70,45,80],[560,530,34,45,26],[460,590,34,26,20],[515,595,24,24,12],[285,465,60,24,45],[225,500,60,30,40],[300,500,50,26,25],[230,540,40,20,14],[620,610,38,28,4],[825,670,40,28,4]];
let seed = 7;
function random() { seed = (seed * 16807) % 2147483647; return seed / 2147483647; }
for (const [cx, cy, rx, ry, count] of crowds) {
  for (let i = 0; i < count; i++) {
    const a = random() * Math.PI * 2, r = Math.sqrt(random());
    sheets[3][2].push([cx + Math.cos(a) * r * rx, cy + Math.sin(a) * r * ry]);
  }
}
const layer = document.getElementById("markers");
for (const [ox, oy, points] of sheets) {
  points.sort((a, b) => a[1] - b[1]);
  for (const [x, y] of points) {
    const c = document.createElementNS("http://www.w3.org/2000/svg", "circle");
    c.setAttribute("cx", ox + x / 3);
    c.setAttribute("cy", oy + y / 3);
    c.setAttribute("r", 5);
    layer.append(c);
  }
}
```
